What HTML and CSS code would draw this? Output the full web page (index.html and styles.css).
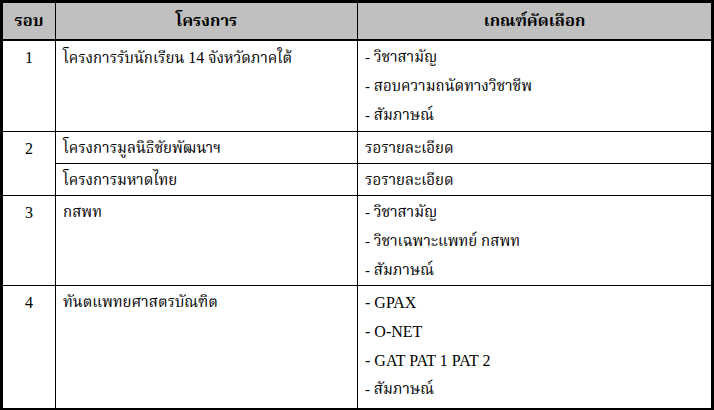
FILE: index.html
```html
<!DOCTYPE html>
<html lang="th">
<head>
<meta charset="utf-8">
<link rel="stylesheet" href="styles.css">
</head>
<body>
<table class="grid">
  <colgroup>
    <col class="c-round">
    <col class="c-project">
    <col class="c-criteria">
  </colgroup>
  <thead>
    <tr class="head">
      <th>รอบ</th>
      <th>โครงการ</th>
      <th>เกณฑ์คัดเลือก</th>
    </tr>
  </thead>
  <tbody>
    <tr class="r3">
      <td class="num">1</td>
      <td><div class="ln">โครงการรับนักเรียน <span class="lat">14</span> จังหวัดภาคใต้</div></td>
      <td>
        <div class="ln">- วิชาสามัญ</div>
        <div class="ln">- สอบความถนัดทางวิชาชีพ</div>
        <div class="ln">- สัมภาษณ์</div>
      </td>
    </tr>
    <tr class="r1">
      <td class="num" rowspan="2">2</td>
      <td><div class="ln">โครงการมูลนิธิชัยพัฒนาฯ</div></td>
      <td><div class="ln">รอรายละเอียด</div></td>
    </tr>
    <tr class="r1">
      <td><div class="ln">โครงการมหาดไทย</div></td>
      <td><div class="ln">รอรายละเอียด</div></td>
    </tr>
    <tr class="r3 r3b">
      <td class="num">3</td>
      <td><div class="ln">กสพท</div></td>
      <td>
        <div class="ln">- วิชาสามัญ</div>
        <div class="ln">- วิชาเฉพาะแพทย์ กสพท</div>
        <div class="ln">- สัมภาษณ์</div>
      </td>
    </tr>
    <tr class="r4">
      <td class="num">4</td>
      <td><div class="ln">ทันตแพทยศาสตรบัณฑิต</div></td>
      <td>
        <div class="ln lat">- GPAX</div>
        <div class="ln lat">- O-NET</div>
        <div class="ln lat">- GAT PAT 1 PAT 2</div>
        <div class="ln">- สัมภาษณ์</div>
      </td>
    </tr>
  </tbody>
</table>
</body>
</html>
```
FILE: styles.css
```css
html, body {
  margin: 0;
  padding: 0;
  background: #ffffff;
}
body {
  font-family: "Liberation Serif", "Noto Serif Thai", "Noto Sans Thai", serif;
  color: #000;
  font-size: 15px;
}
.grid {
  width: 714px;
  border-collapse: collapse;
  table-layout: fixed;
  border: 3px solid #000;
}
.c-round { width: 54px; }
.c-project { width: 302px; }
.grid th, .grid td {
  border: 1px solid #000;
  padding: 0 7px;
  vertical-align: top;
  text-align: left;
}
.grid td {
  padding-top: 2px;
}
.head th {
  background: #c0c0c0;
  height: 36px;
  font-size: 16.5px;
  font-weight: bold;
  text-align: center;
  vertical-align: middle;
  border-bottom: 2px solid #000;
}
.grid td.num {
  text-align: center;
  font-size: 16px;
}
.num {
  line-height: 29px;
}
.lat {
  font-size: 16px;
}
.ln {
  line-height: 29px;
  height: 29px;
  white-space: nowrap;
}
.r3 td { height: 88px; }
.r3b td { height: 87px; }
.r1 td { height: 29px; }
.r4 td { height: 120px; }
```
